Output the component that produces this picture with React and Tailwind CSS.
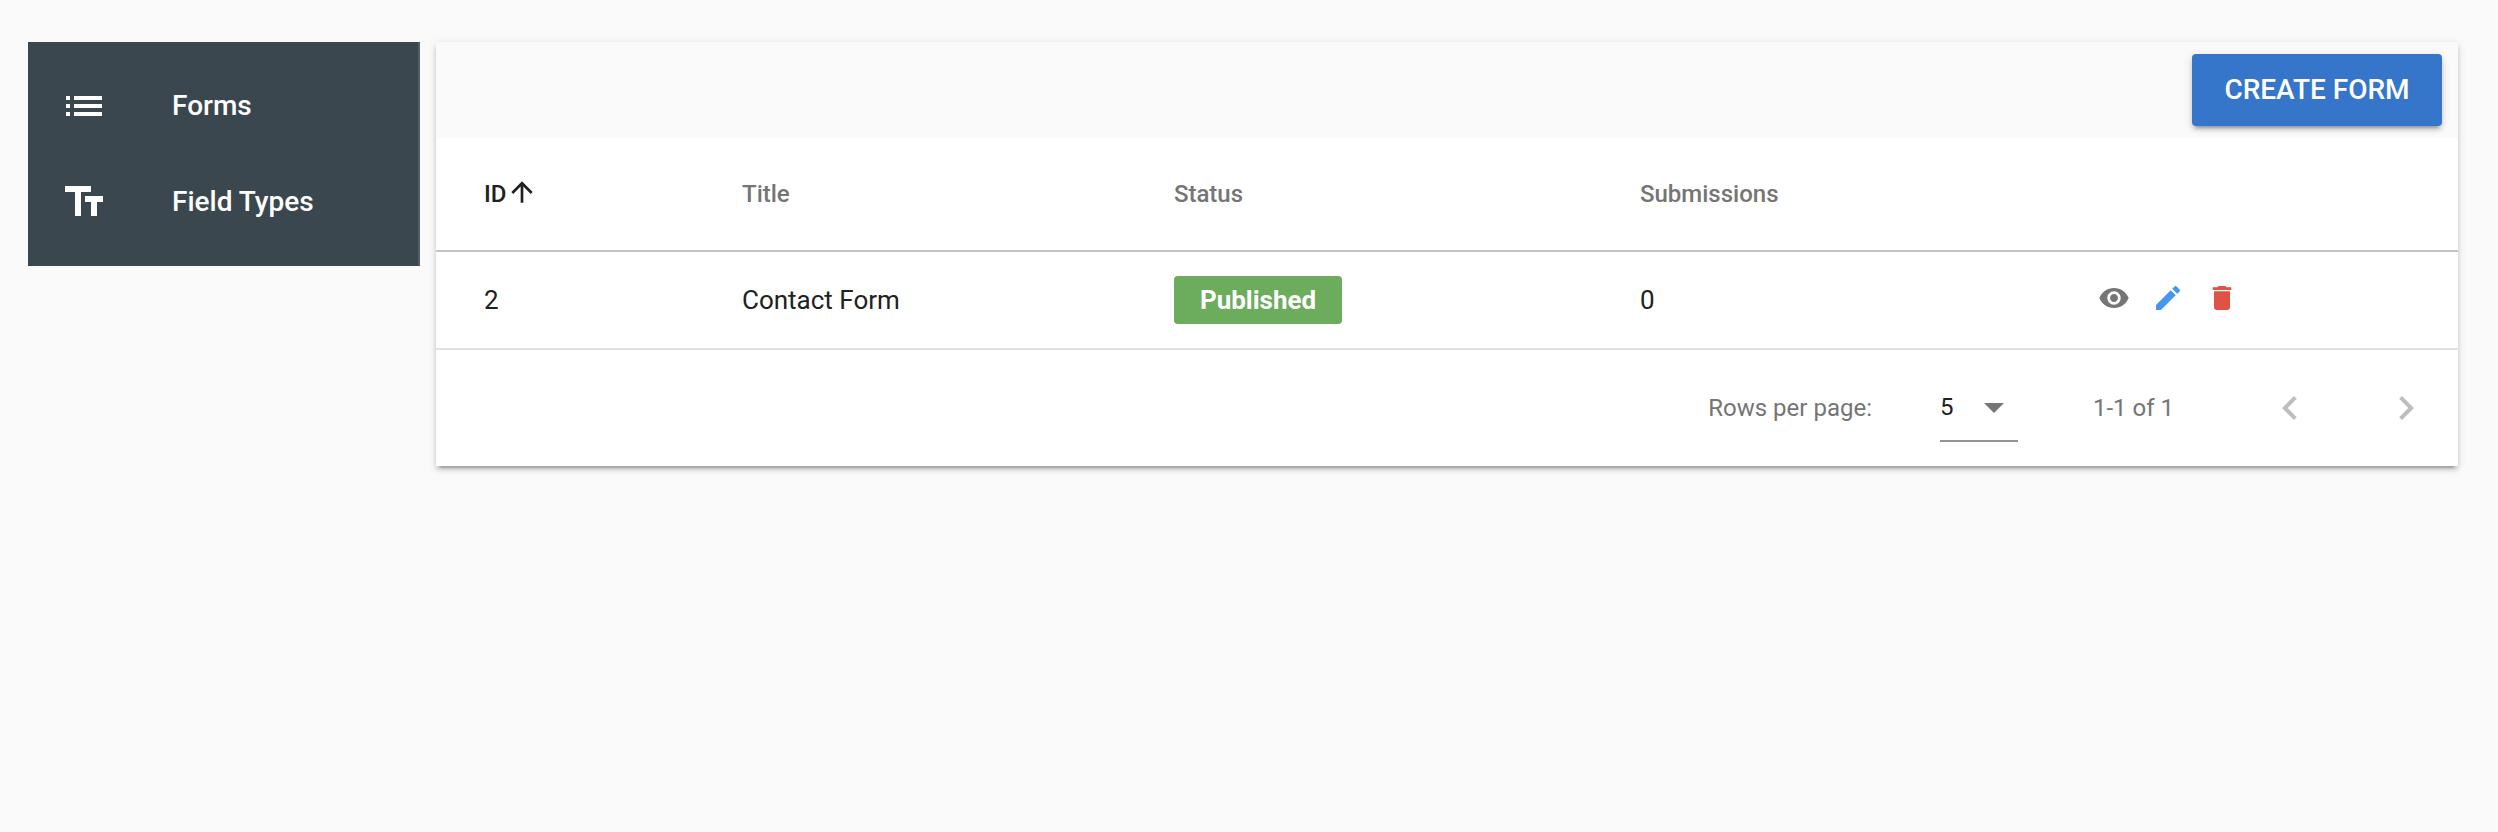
const ICONS = {
  list: "M3 13h2v-2H3v2zm0 4h2v-2H3v2zm0-8h2V7H3v2zm4 4h14v-2H7v2zm0 4h14v-2H7v2zM7 7v2h14V7H7z",
  text: "M2.5 4v3h5v12h3V7h5V4h-13zm19 5h-9v3h3v7h3v-7h3V9z",
  up: "M4 12l1.41 1.41L11 7.83V20h2V7.83l5.58 5.59L20 12l-8-8-8 8z",
  eye: "M12 4.5C7 4.5 2.73 7.61 1 12c1.73 4.39 6 7.5 11 7.5s9.27-3.11 11-7.5c-1.73-4.39-6-7.5-11-7.5zM12 17c-2.76 0-5-2.24-5-5s2.24-5 5-5 5 2.24 5 5-2.24 5-5 5zm0-8c-1.66 0-3 1.34-3 3s1.34 3 3 3 3-1.34 3-3-1.34-3-3-3z",
  edit: "M3 17.25V21h3.75L17.81 9.94l-3.75-3.75L3 17.25zM20.71 7.04c.39-.39.39-1.02 0-1.41l-2.34-2.34c-.39-.39-1.02-.39-1.41 0l-1.83 1.83 3.75 3.75 1.83-1.83z",
  trash: "M6 19c0 1.1.9 2 2 2h8c1.1 0 2-.9 2-2V7H6v12zM19 4h-3.5l-1-1h-5l-1 1H5v2h14V4z",
  caret: "M7 10l5 5 5-5z",
  left: "M15.41 7.41L14 6l-6 6 6 6 1.41-1.41L10.83 12z",
  right: "M10 6L8.59 7.41 13.17 12l-4.58 4.59L10 18l6-6z",
};

function Icon({ name, className }) {
  return (
    <svg viewBox="0 0 24 24" fill="currentColor" aria-hidden="true" className={className}>
      <path d={ICONS[name]} />
    </svg>
  );
}

const NAV = [
  { icon: "list", label: "Forms" },
  { icon: "text", label: "Field Types" },
];

const ROWS = [{ id: 2, title: "Contact Form", status: "Published", submissions: 0 }];

const HEAD_CELL = "border-b-2 border-[#c4c4c4] px-12 font-medium";
const BODY_CELL = "border-b-2 border-[#e0e0e0] px-12";
const ELEVATION =
  "shadow-[0_6px_2px_-4px_rgba(0,0,0,0.2),0_4px_4px_0_rgba(0,0,0,0.14),0_2px_10px_0_rgba(0,0,0,0.12)]";

function Sidebar() {
  return (
    <nav className="w-[392px] shrink-0 border-r-2 border-[#525d64] bg-[#3b474e] py-4">
      {NAV.map((item) => (
        <a
          key={item.label}
          href="#"
          className="flex h-24 items-center gap-16 px-8 text-[28px] font-medium text-white"
        >
          <Icon name={item.icon} className="size-12" />
          {item.label}
        </a>
      ))}
    </nav>
  );
}

function FormsTable() {
  return (
    <table className="w-full table-fixed border-separate border-spacing-0 text-left">
      <colgroup>
        <col className="w-[12.76%]" />
        <col className="w-[21.36%]" />
        <col className="w-[23.05%]" />
        <col className="w-[22.65%]" />
        <col />
      </colgroup>
      <thead className="text-2xl leading-9 text-[#757575]">
        <tr className="h-[114px]">
          <th aria-sort="ascending" className={HEAD_CELL}>
            <button type="button" className="flex items-start text-[#212121]">
              ID
              <Icon name="up" className="size-8" />
            </button>
          </th>
          <th className={HEAD_CELL}>Title</th>
          <th className={HEAD_CELL}>Status</th>
          <th className={HEAD_CELL}>Submissions</th>
          <th aria-label="Actions" className={HEAD_CELL} />
        </tr>
      </thead>
      <tbody className="text-[26px] leading-9 text-[#212121]">
        {ROWS.map((row) => (
          <tr key={row.id} className="h-[98px]">
            <td className={BODY_CELL}>{row.id}</td>
            <td className={BODY_CELL}>{row.title}</td>
            <td className={BODY_CELL}>
              <span className="flex h-12 w-fit items-center rounded-sm bg-[#6bac5d] px-[26px] font-bold text-white">
                {row.status}
              </span>
            </td>
            <td className={BODY_CELL}>{row.submissions}</td>
            <td className={BODY_CELL}>
              <div className="flex h-9 items-start gap-[22px]">
                <button type="button" aria-label="View" className="text-[#757575]">
                  <Icon name="eye" className="size-8" />
                </button>
                <button type="button" aria-label="Edit" className="text-[#4696ec]">
                  <Icon name="edit" className="size-8" />
                </button>
                <button type="button" aria-label="Delete" className="text-[#e05243]">
                  <Icon name="trash" className="size-8" />
                </button>
              </div>
            </td>
          </tr>
        ))}
      </tbody>
    </table>
  );
}

function Pagination() {
  return (
    <div className="flex h-[116px] items-center justify-end pr-7 text-2xl text-[#757575]">
      <label htmlFor="rows-per-page">Rows per page:</label>
      <div className="mr-[75px] ml-[68px] grid h-[68px] w-[78px] items-center border-b-2 border-[#949494]">
        <select
          id="rows-per-page"
          defaultValue="5"
          className="col-start-1 row-start-1 h-full w-full appearance-none bg-transparent text-[#212121]"
        >
          <option>5</option>
          <option>10</option>
          <option>25</option>
        </select>
        <Icon
          name="caret"
          className="pointer-events-none col-start-1 row-start-1 size-12 justify-self-end"
        />
      </div>
      <span>1-1 of 1</span>
      <div className="ml-[92px] flex gap-[68px] text-[#bdbdbd]">
        <button type="button" disabled aria-label="Previous page">
          <Icon name="left" className="size-12" />
        </button>
        <button type="button" disabled aria-label="Next page">
          <Icon name="right" className="size-12" />
        </button>
      </div>
    </div>
  );
}

export default function App() {
  return (
    <div className="flex min-h-screen items-start gap-4 bg-[#fafafa] py-[42px] pr-10 pl-7 font-['Roboto',sans-serif]">
      <Sidebar />
      <main className={`min-w-0 flex-1 rounded-t-xs bg-[#fafafa] ${ELEVATION}`}>
        <div className="flex justify-end px-4 py-3">
          <button
            type="button"
            className={`h-[72px] min-w-[250px] rounded-sm bg-[#3576cb] px-8 text-[28px] font-medium text-white uppercase ${ELEVATION}`}
          >
            Create Form
          </button>
        </div>
        <section className="rounded-t-sm bg-white">
          <FormsTable />
          <Pagination />
        </section>
      </main>
    </div>
  );
}
